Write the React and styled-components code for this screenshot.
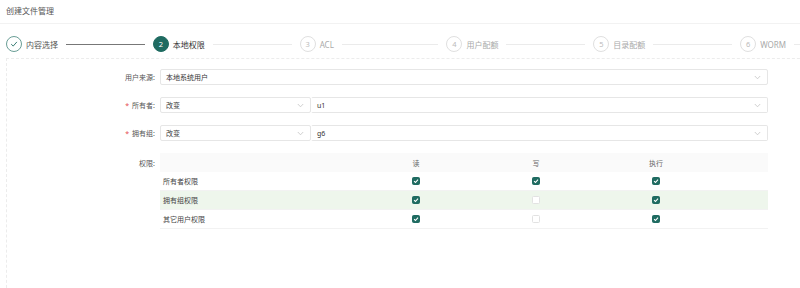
import React from "react";
import styled, { createGlobalStyle } from "styled-components";

const GlobalStyle = createGlobalStyle`
  html, body {
    margin: 0;
    padding: 0;
    background: #fff;
    overflow: hidden;
  }
  body {
    font-family: "Noto Sans", "Noto Sans CJK SC", sans-serif;
    color: #333;
  }
`;

const TEAL = "#1f6b61";

const steps = [
  { no: 1, label: "内容选择", state: "done" },
  { no: 2, label: "本地权限", state: "active" },
  { no: 3, label: "ACL", state: "wait" },
  { no: 4, label: "用户配额", state: "wait" },
  { no: 5, label: "目录配额", state: "wait" },
  { no: 6, label: "WORM", state: "wait" },
];

const perms = [
  { name: "所有者权限", r: true, w: true, x: true },
  { name: "拥有组权限", r: true, w: false, x: true, hover: true },
  { name: "其它用户权限", r: true, w: false, x: true },
];

export default function App() {
  return (
    <>
      <GlobalStyle />
      <Page>
        <Header>创建文件管理</Header>

        {/* steps */}
        <Steps>
          {steps.map((s) => (
            <Step key={s.no}>
              <Circle $state={s.state}>
                {s.state === "done" ? (
                  <svg width="8" height="8" viewBox="0 0 10 10">
                    <path d="M1.5 5.2 L4 7.6 L8.6 2.4" fill="none" stroke={TEAL} strokeWidth="1.1" />
                  </svg>
                ) : (
                  s.no
                )}
              </Circle>
              <StepLabel $state={s.state}>{s.label}</StepLabel>
              <Tail $state={s.state} />
            </Step>
          ))}
        </Steps>

        <Card>
          <Form>
            <Label>用户来源:</Label>
            <Select $width="608px">
              <span>本地系统用户</span>
              <Chevron />
            </Select>

            <Label $required>所有者:</Label>
            <Group>
              <Select $width="151px">
                <span>改变</span>
                <Chevron />
              </Select>
              <Select $width="457px" $joined>
                <span>u1</span>
                <Chevron />
              </Select>
            </Group>

            <Label $required>拥有组:</Label>
            <Group>
              <Select $width="151px">
                <span>改变</span>
                <Chevron />
              </Select>
              <Select $width="457px" $joined>
                <span>g6</span>
                <Chevron />
              </Select>
            </Group>

            <Label $top>权限:</Label>
            <Table>
              <HeadRow>
                <Cell />
                <Cell $center>读</Cell>
                <Cell $center>写</Cell>
                <Cell $center>执行</Cell>
                <Cell />
              </HeadRow>
              {perms.map((p) => (
                <BodyRow key={p.name} $hover={p.hover}>
                  <Cell>{p.name}</Cell>
                  <Cell $center><Check checked={p.r} /></Cell>
                  <Cell $center><Check checked={p.w} /></Cell>
                  <Cell $center><Check checked={p.x} /></Cell>
                  <Cell />
                </BodyRow>
              ))}
            </Table>
          </Form>
        </Card>
      </Page>
    </>
  );
}

function Chevron() {
  return (
    <ChevronIcon width="7" height="5" viewBox="0 0 7 5">
      <path d="M0.8 1 L3.5 3.8 L6.2 1" fill="none" stroke="#c4c4c4" strokeWidth="0.8" />
    </ChevronIcon>
  );
}

function Check({ checked }) {
  return (
    <Box $checked={checked}>
      {checked && (
        <svg width="6" height="6" viewBox="0 0 10 10">
          <path d="M1.8 5.3 L4.1 7.5 L8.4 2.6" fill="none" stroke="#fff" strokeWidth="1.8" />
        </svg>
      )}
    </Box>
  );
}

const Page = styled.div`
  width: 900px;
`;

const Header = styled.div`
  height: 23px;
  line-height: 21px;
  padding-left: 6px;
  font-size: 8px;
  color: #555;
  border-bottom: 1px solid #f2f2f2;
`;

const Steps = styled.div`
  display: flex;
  width: 881px;
  margin: 12px 0 0 6px;
  height: 16px;
`;

const Step = styled.div`
  flex: 1;
  display: flex;
  align-items: center;
  min-width: 0;
`;

const Circle = styled.div`
  flex: none;
  width: 16px;
  height: 16px;
  box-sizing: border-box;
  border-radius: 50%;
  display: flex;
  align-items: center;
  justify-content: center;
  font-size: 7.5px;
  border: 1px solid
    ${(p) => (p.$state === "done" ? "#6a9e96" : p.$state === "active" ? TEAL : "#e0e0e0")};
  background: ${(p) => (p.$state === "active" ? TEAL : "#fff")};
  color: ${(p) => (p.$state === "active" ? "#fff" : "#bbb")};
`;

const StepLabel = styled.span`
  flex: none;
  margin-left: 4px;
  font-size: 8px;
  color: ${(p) => (p.$state === "active" ? "#333" : p.$state === "done" ? "#555" : "#aaa")};
`;

const Tail = styled.div`
  flex: 1;
  height: 1px;
  margin: 0 8px;
  background: ${(p) => (p.$state === "done" ? "#777" : "#ebebeb")};
`;

const Card = styled.div`
  margin: 6px 0 0 6px;
  padding: 10px 0 40px;
  border: 1px dashed #ececec;
  border-right: none;
  border-bottom: none;
  height: 240px;
  box-sizing: border-box;
`;

const Form = styled.div`
  display: grid;
  grid-template-columns: 153px 608px;
  row-gap: 12px;
  align-items: center;
`;

const Label = styled.div`
  align-self: ${(p) => (p.$top ? "start" : "center")};
  padding-top: ${(p) => (p.$top ? "5px" : "0")};
  text-align: right;
  padding-right: 5px;
  font-size: 7px;
  color: #555;
  &::before {
    content: ${(p) => (p.$required ? '"*"' : "none")};
    color: #e5484d;
    margin-right: 3px;
  }
`;

const Group = styled.div`
  display: flex;
`;

const Select = styled.div`
  width: ${(p) => p.$width};
  height: 16px;
  box-sizing: border-box;
  border: 1px solid #e6e6e6;
  border-left-color: ${(p) => (p.$joined ? "transparent" : "#e6e6e6")};
  border-radius: 2px;
  display: flex;
  align-items: center;
  justify-content: space-between;
  padding: 0 6px 0 5px;
  font-size: 7px;
  color: #333;
`;

const ChevronIcon = styled.svg`
  flex: none;
`;

const Table = styled.div`
  display: flex;
  flex-direction: column;
  font-size: 7px;
  color: #444;
`;

const HeadRow = styled.div`
  display: grid;
  grid-template-columns: 196px 120px 120px 120px 1fr;
  height: 19px;
  align-items: center;
  background: #fafafa;
  color: #666;
`;

const BodyRow = styled.div`
  display: grid;
  grid-template-columns: 196px 120px 120px 120px 1fr;
  height: 19px;
  align-items: center;
  background: ${(p) => (p.$hover ? "#eef6ec" : "#fff")};
  border-bottom: 1px solid #f2f2f2;
  box-sizing: border-box;
`;

const Cell = styled.div`
  display: flex;
  align-items: center;
  justify-content: ${(p) => (p.$center ? "center" : "flex-start")};
  padding-left: ${(p) => (p.$center ? "0" : "3px")};
`;

const Box = styled.span`
  width: 8px;
  height: 8px;
  box-sizing: border-box;
  border-radius: 1.5px;
  display: inline-flex;
  align-items: center;
  justify-content: center;
  background: ${(p) => (p.$checked ? TEAL : "#fff")};
  border: 1px solid ${(p) => (p.$checked ? TEAL : "#e2e2e2")};
`;
